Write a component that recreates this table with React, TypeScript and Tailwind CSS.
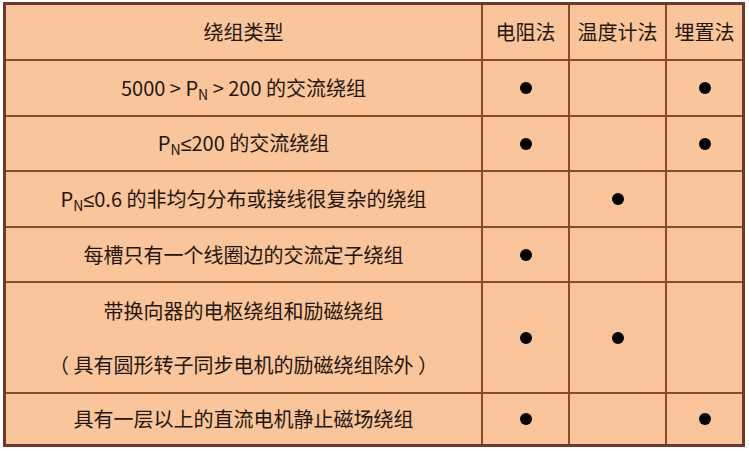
import React from "react";

const font = {
  fontFamily: '"Noto Sans CJK SC", "Noto Sans", sans-serif',
};

function PN() {
  return (
    <span>
      P<span className="relative top-[4px] text-[14px]">N</span>
    </span>
  );
}

function Le() {
  return <span style={{ fontFamily: '"Liberation Sans", sans-serif' }}>≤</span>;
}

type Row = {
  label: React.ReactNode;
  h: string;
  marks: [boolean, boolean, boolean];
};

const rows: Row[] = [
  {
    label: (
      <span>
        5000 &gt; <PN /> &gt; 200 的交流绕组
      </span>
    ),
    h: "h-[54px]",
    marks: [true, false, true],
  },
  {
    label: (
      <span>
        <PN />
        <Le />200 的交流绕组
      </span>
    ),
    h: "h-[53px]",
    marks: [true, false, true],
  },
  {
    label: (
      <span>
        <PN />
        <Le />0.6 的非均匀分布或接线很复杂的绕组
      </span>
    ),
    h: "h-[54px]",
    marks: [false, true, false],
  },
  {
    label: <span>每槽只有一个线圈边的交流定子绕组</span>,
    h: "h-[53px]",
    marks: [true, false, false],
  },
  {
    label: (
      <div className="flex flex-col items-center gap-[24px]">
        <span>带换向器的电枢绕组和励磁绕组</span>
        <span>（ 具有圆形转子同步电机的励磁绕组除外 ）</span>
      </div>
    ),
    h: "h-[109px]",
    marks: [true, true, false],
  },
  {
    label: <span>具有一层以上的直流电机静止磁场绕组</span>,
    h: "h-[50px]",
    marks: [true, false, true],
  },
];

function Dot() {
  return <div className="h-[12px] w-[12px] rounded-full bg-black" />;
}

export default function App() {
  return (
    <div className="h-[451px] w-[749px] bg-white pl-[3px] pt-[2px]" style={font}>
      <div className="grid w-[742px] grid-cols-[475px_85px_95px_75px] gap-[2px] border-[3px] border-[#6e3a2c] bg-[#8c4a2a] text-[20px] text-[#24150e]">
        <div className="flex h-[54px] items-center justify-center bg-[#fbc59b]">绕组类型</div>
        <div className="flex items-center justify-center bg-[#fbc59b]">电阻法</div>
        <div className="flex items-center justify-center bg-[#fbc59b]">温度计法</div>
        <div className="flex items-center justify-center bg-[#fbc59b]">埋置法</div>
        {rows.map((r, i) => (
          <React.Fragment key={i}>
            <div className={`flex ${r.h} items-center justify-center bg-[#fbc59b]`}>
              {r.label}
            </div>
            {r.marks.map((m, j) => (
              <div key={j} className="flex items-center justify-center bg-[#fbc59b]">
                {m && <Dot />}
              </div>
            ))}
          </React.Fragment>
        ))}
      </div>
    </div>
  );
}
